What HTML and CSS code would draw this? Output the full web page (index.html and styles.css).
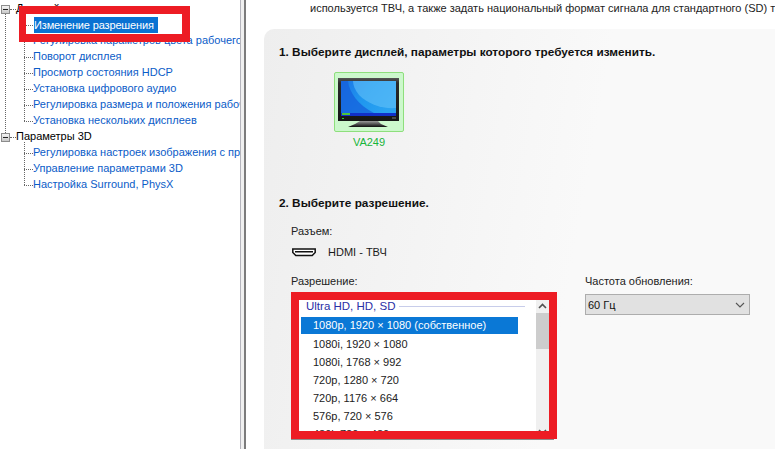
FILE: index.html
```html
<!DOCTYPE html>
<html lang="ru">
<head>
<meta charset="utf-8">
<title>Изменение разрешения</title>
<link rel="stylesheet" href="styles.css">
</head>
<body>
<div class="app">
  <nav class="tree">
    <div class="node root first"><span class="toggle"></span><span class="lbl">Дисплей</span></div>
    <div class="kids">
      <div class="node"><span class="lbl sel">Изменение разрешения</span></div>
      <div class="node"><span class="lbl">Регулировка параметров цвета рабочего стола</span></div>
      <div class="node"><span class="lbl">Поворот дисплея</span></div>
      <div class="node"><span class="lbl">Просмотр состояния HDCP</span></div>
      <div class="node"><span class="lbl">Установка цифрового аудио</span></div>
      <div class="node"><span class="lbl">Регулировка размера и положения рабочего стола</span></div>
      <div class="node"><span class="lbl">Установка нескольких дисплеев</span></div>
    </div>
    <div class="node root"><span class="toggle"></span><span class="lbl">Параметры 3D</span></div>
    <div class="kids">
      <div class="node"><span class="lbl">Регулировка настроек изображения с просмотром</span></div>
      <div class="node"><span class="lbl">Управление параметрами 3D</span></div>
      <div class="node"><span class="lbl">Настройка Surround, PhysX</span></div>
    </div>
  </nav>
  <div class="splitter"></div>
  <main class="content">
    <p class="intro">используется ТВЧ, а также задать национальный формат сигнала для стандартного (SD) телевидения.</p>
    <section class="panel">
      <h2 class="step">1. Выберите дисплей, параметры которого требуется изменить.</h2>
      <div class="display">
        <div class="display-frame">
          <svg class="monitor" width="62" height="50" viewBox="0 0 62 50">
            <defs>
              <linearGradient id="scr" x1="0" y1="0" x2="1" y2="0.5">
                <stop offset="0" stop-color="#1c74e6"/>
                <stop offset="0.5" stop-color="#1f96ee"/>
                <stop offset="1" stop-color="#2aa3f2"/>
              </linearGradient>
              <linearGradient id="bez" x1="0" y1="0" x2="0" y2="1">
                <stop offset="0" stop-color="#555"/>
                <stop offset="0.12" stop-color="#2a2a2a"/>
                <stop offset="1" stop-color="#161616"/>
              </linearGradient>
              <linearGradient id="stand" x1="0" y1="0" x2="0" y2="1">
                <stop offset="0" stop-color="#9a9a9a"/>
                <stop offset="0.5" stop-color="#555"/>
                <stop offset="1" stop-color="#0c0c0c"/>
              </linearGradient>
            </defs>
            <path d="M22 43h18l3 3 7 3H10l7-3z" fill="url(#stand)"/>
            <rect x="0" y="0" width="61" height="43" fill="url(#bez)"/>
            <rect x="3" y="3" width="55" height="35" fill="url(#scr)"/>
            <path d="M15 3H58V30C44 31 30 26 21 17 17 12 15 7 15 3z" fill="#62c2f8" opacity=".6"/>
            <path d="M3 3H10C11 14 20 27 36 35H3z" fill="#1660dc" opacity=".75"/>
            <rect x="3" y="35" width="55" height="3" fill="#1230c8"/>
            <rect x="4" y="35" width="8" height="2" fill="#4cc63a"/>
            <rect x="4" y="40" width="2" height="1" fill="#2fd02f"/>
            <rect x="54" y="39" width="4" height="2" fill="#4a4a4a"/>
          </svg>
        </div>
        <div class="display-name">VA249</div>
      </div>
      <h2 class="step step-two">2. Выберите разрешение.</h2>
      <div class="field-label">Разъем:</div>
      <div class="connector">
        <svg width="24" height="9" viewBox="0 0 24 9"><path d="M.8 1h22.400v3.500l-3 3H3.800l-3-3z" fill="#fff" stroke="#111" stroke-width="1.500"/><rect x="3" y="3" width="18" height="1.500" fill="#111"/></svg>
        <span>HDMI - ТВЧ</span>
      </div>
      <div class="selectors">
        <div class="res-col">
          <div class="field-label">Разрешение:</div>
          <div class="listbox">
            <div class="list-main">
              <div class="group"><span>Ultra HD, HD, SD</span><i></i></div>
              <div class="opt active">1080p, 1920 × 1080 (собственное)</div>
              <div class="opt">1080i, 1920 × 1080</div>
              <div class="opt">1080i, 1768 × 992</div>
              <div class="opt">720p, 1280 × 720</div>
              <div class="opt">720p, 1176 × 664</div>
              <div class="opt">576p, 720 × 576</div>
              <div class="opt">480i, 720 × 480</div>
            </div>
            <div class="scrollbar">
              <svg class="arrow" width="9" height="6" viewBox="0 0 9 6"><path d="M1 5l3.500-3.500L8 5" fill="none" stroke="#505050" stroke-width="1.600"/></svg>
              <div class="track"><div class="thumb"></div></div>
              <svg class="arrow" width="9" height="6" viewBox="0 0 9 6"><path d="M1 1l3.500 3.500L8 1" fill="none" stroke="#505050" stroke-width="1.600"/></svg>
            </div>
          </div>
        </div>
        <div class="rate-col">
          <div class="field-label">Частота обновления:</div>
          <div class="combo">
            <span>60 Гц</span>
            <svg width="10" height="6" viewBox="0 0 10 6"><path d="M1 1l4 4 4-4" fill="none" stroke="#555" stroke-width="1.100"/></svg>
          </div>
        </div>
      </div>
    </section>
  </main>
</div>
<div class="mark mark-tree"></div>
<div class="mark mark-list"></div>
</body>
</html>
```
FILE: styles.css
```css
* { box-sizing: border-box; }
html, body { margin: 0; height: 100%; }
body {
  width: 775px;
  height: 449px;
  overflow: hidden;
  position: relative;
  background: #fff;
  font: 11px/16px "Liberation Sans", Arial, sans-serif;
  color: #1a1a1a;
}
.app { display: flex; height: 449px; }

/* navigation tree */
.tree { width: 240px; flex: none; overflow: hidden; position: relative; white-space: nowrap; }
.node { height: 16px; position: relative; }
.lbl { display: inline-block; color: #0b5cc8; }
.kids { padding-left: 33px; position: relative; }
.kids::before {
  content: ""; position: absolute; left: 24px; top: -2px; bottom: 7px;
  border-left: 1px dotted #666;
}
.kids .node::before {
  content: ""; position: absolute; left: -9px; top: 9px; width: 9px;
  border-top: 1px dotted #666;
}
.root { padding-left: 16px; color: #000; }
.root .lbl { color: #000; }
.toggle {
  position: absolute; left: 1px; top: 5px; width: 9px; height: 9px;
  border: 1px solid #8c8c8c; background: linear-gradient(#f4f4f4, #c9c9c9);
}
.toggle::after { content: ""; position: absolute; left: 1px; top: 3px; width: 5px; height: 1px; background: #222; }
.root::before {
  content: ""; position: absolute; left: 10px; top: 9px; width: 6px;
  border-top: 1px dotted #666;
}
.first::after {
  content: ""; position: absolute; left: 5px; top: 14px; height: 119px;
  border-left: 1px dotted #666;
}
.sel { background: #0a72d2; color: #fff; margin-left: 1px; padding-right: 4px; height: 16px; margin-top: 1px; vertical-align: top; letter-spacing: -.15px; }

/* splitter */
.splitter { width: 6px; flex: none; border-left: 1px solid #b4b4bc; border-right: 2px solid #7c7c7c; background: #f0f0f0; }

/* content */
.content { flex: 1; min-width: 0; padding-left: 18px; overflow: hidden; }
.intro { margin: 0 0 0 46px; height: 29px; white-space: nowrap; color: #222; }
.panel {
  height: 420px; padding: 15px 15px 0;
  border-radius: 10px 0 0 0;
  background: linear-gradient(100deg, #eeeeee, #f9f9f9 60%);
}
.step { margin: 0; font-size: 11.800px; line-height: 16px; font-weight: 700; color: #111; white-space: nowrap; }
.display { width: 70px; margin: 12px 0 0 55px; }
.display-frame {
  width: 70px; height: 60px; padding: 5px 0 0 3px;
  background: #ccf8cc; border: 1px solid #8edf7c; border-radius: 2px;
}
.monitor { display: block; }
.display-name { text-align: center; color: #18b53a; margin-top: 2px; }
.step-two { margin-top: 45px; }
.field-label { margin-left: 12px; color: #222; }
.step-two + .field-label { margin-top: 12px; }
.connector { display: flex; align-items: center; gap: 12px; margin: 5px 0 0 13px; height: 16px; }
.selectors { display: flex; margin: 13px 0 0 12px; }
.res-col .field-label, .rate-col .field-label { margin-left: 0; }
.res-col { width: 294px; }
.listbox {
  display: flex; width: 263px; height: 148px; margin-top: 3px; padding: 8px 5px 0 8px;
  background: #fff; border-bottom: 1px solid #8d8d8d; overflow: hidden;
}
.list-main { flex: 1; min-width: 0; padding-left: 2px; overflow: hidden; height: 139px; }
.group { display: flex; align-items: center; gap: 4px; height: 12px; padding: 0 11px 0 5px; margin-bottom: 5px; color: #2a2fa6; font-size: 11.500px; }
.group i { flex: 1; height: 1px; background: #c8cdea; }
.opt { height: 18px; line-height: 18px; padding-left: 12px; margin-right: 18px; color: #222; }
.opt.active { height: 17px; line-height: 17px; background: #0a78d6; color: #fff; margin-bottom: 1px; }
.scrollbar { width: 13px; height: 139px; flex: none; display: flex; flex-direction: column; align-items: center; background: #f0f0f0; }
.arrow { flex: none; margin: 3px 0 4px; }
.track { flex: 1; width: 100%; }
.thumb { height: 36px; background: #cdcdcd; }
.rate-col { width: 165px; }
.combo {
  display: flex; align-items: center; justify-content: space-between;
  height: 21px; margin-top: 5px; padding: 0 4px 0 2px;
  background: #e1e1e1; border: 1px solid #adadad; color: #111;
}

/* red annotation frames */
.mark { position: absolute; border: 8px solid #ed1c24; }
.mark-tree { left: 19px; top: 6px; width: 171px; height: 36px; border-left-width: 7px; }
.mark-list { left: 291px; top: 292px; width: 266px; height: 147px; }
```
